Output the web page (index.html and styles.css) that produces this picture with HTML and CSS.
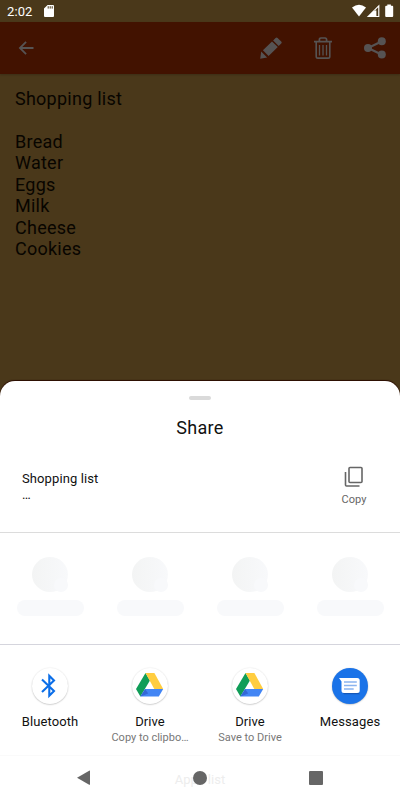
FILE: index.html
```html
<!DOCTYPE html>
<html lang="en">
<head>
    <meta charset="UTF-8">
    <meta name="viewport" content="width=device-width, initial-scale=1.0">
    <title>Share</title>
    <link rel="stylesheet" href="styles.css">
</head>
<body>
    <div class="status-bar">
        <span class="time">2:02</span>
        <svg class="sd-card" width="10" height="12" viewBox="0 0 10 12">
            <path fill="#fff" d="M3.6 0H9a1 1 0 0 1 1 1v10a1 1 0 0 1-1 1H1a1 1 0 0 1-1-1V3.6z"/>
            <path stroke="#4a381a" stroke-width="1" d="M4.2 1.2v2.4M6.2 1.2v2.4M8.2 1.2v2.4"/>
        </svg>
        <svg class="signals" width="42" height="14" viewBox="0 0 42 14">
            <path fill="#fff" d="M0 3.4Q7-1.8 14 3.4L7 12.500z"/>
            <path fill="#fff" d="M27.4.5v12.600H14.8z"/>
            <path fill="#4a381a" d="M22.2 7.2l4-3.900v8.600h-1.800V6.500h-2.200z"/>
            <path fill="#fff" d="M35.3.500h3.600v1.200h1.300a1 1 0 0 1 1 1v9.400a1 1 0 0 1-1 1h-6a1 1 0 0 1-1-1V2.700a1 1 0 0 1 1-1h1.100z"/>
        </svg>
    </div>
    <div class="toolbar">
        <svg class="back" width="16" height="14" viewBox="0 0 16 14">
            <path fill="none" stroke="#565353" stroke-width="1.8" d="M15.500 7H2M8.100.8L1.900 7l6.200 6.200"/>
        </svg>
        <svg width="22" height="22" viewBox="0 0 22 22">
            <path fill="#565353" d="M.2 21.8l1-7.3 5.9 5.9zM2.9 13.3L12 4.4l5.8 5.7-9.2 9zM13.1 3.4L15.6.9q1-1 2 0l3.6 3.6q1 1 0 2l-2.500 2.500z"/>
        </svg>
        <svg width="18" height="22" viewBox="0 0 18 22">
            <g fill="none" stroke="#565353">
                <path stroke-width="1.7" d="M0 4.700h18M5.400 4V2.700Q5.400 1 7 1h4q1.600 0 1.600 1.700V4"/>
                <path stroke-width="1.6" d="M2.200 5v14.400q0 1.700 1.700 1.700h10.200q1.700 0 1.700-1.700V5"/>
                <path stroke-width="1.3" d="M5.500 8v10.500M9 8v10.500M12.500 8v10.500"/>
            </g>
        </svg>
        <svg width="22" height="22" viewBox="0 0 22 22">
            <path fill="none" stroke="#565353" stroke-width="2.2" d="M17.500 4.500L4 11l13.500 6.500"/>
            <g fill="#565353">
                <circle cx="17.800" cy="4.200" r="4"/>
                <circle cx="4" cy="11" r="4"/>
                <circle cx="17.800" cy="17.600" r="4"/>
            </g>
        </svg>
    </div>
    <div class="note">Shopping list

Bread
Water
Eggs
Milk
Cheese
Cookies</div>

    <div class="sheet">
        <div class="handle"></div>
        <h1>Share</h1>
        <div class="preview">
            <div class="preview-text">Shopping list<br>…</div>
            <div class="copy">
                <svg width="20" height="22" viewBox="0 0 20 22">
                    <path fill="none" stroke="#666" stroke-width="1.6" d="M6 1.500h11q1 0 1 1v13q0 1-1 1H6q-1 0-1-1v-13q0-1 1-1zM1.500 6v13q0 1 1 1H15.500"/>
                </svg>
                <span>Copy</span>
            </div>
        </div>
        <div class="contacts">
            <div class="contact"><div class="avatar"></div><div class="bar"></div></div>
            <div class="contact"><div class="avatar"></div><div class="bar"></div></div>
            <div class="contact"><div class="avatar"></div><div class="bar"></div></div>
            <div class="contact"><div class="avatar"></div><div class="bar"></div></div>
        </div>
        <div class="apps">
            <div class="app">
                <div class="app-icon">
                    <svg width="36" height="36" viewBox="0 0 36 36">
                        <path fill="none" stroke="#0b6ee8" stroke-width="2.1" d="M10 11.500l12 11.500-4.700 4.800V7.800l4.700 4.700-12 11.500"/>
                    </svg>
                </div>
                <div class="name">Bluetooth</div>
            </div>
            <div class="app">
                <div class="app-icon">
                    <svg width="36" height="36" viewBox="0 0 36 36">
                        <path fill="#109d58" d="M13.500 5L4 21l4.400 7.500 9.500-16z"/>
                        <path fill="#ffcd40" d="M13.500 5h8.900l8.800 16h-8.900z"/>
                        <path fill="#4285f4" d="M13.100 21h18.100L26.800 28.500H8.400z"/>
                        <path fill="#3468d5" d="M13.100 21l3.100 4.500L8.400 28.500z"/>
                    </svg>
                </div>
                <div class="name">Drive</div>
                <div class="detail">Copy to clipbo…</div>
            </div>
            <div class="app">
                <div class="app-icon">
                    <svg width="36" height="36" viewBox="0 0 36 36">
                        <path fill="#109d58" d="M13.500 5L4 21l4.400 7.500 9.500-16z"/>
                        <path fill="#ffcd40" d="M13.500 5h8.900l8.800 16h-8.900z"/>
                        <path fill="#4285f4" d="M13.100 21h18.100L26.800 28.500H8.400z"/>
                        <path fill="#3468d5" d="M13.100 21l3.100 4.500L8.400 28.500z"/>
                    </svg>
                </div>
                <div class="name">Drive</div>
                <div class="detail">Save to Drive</div>
            </div>
            <div class="app">
                <div class="app-icon messages">
                    <svg width="36" height="36" viewBox="0 0 36 36">
                        <path fill="#1558b8" d="M11 25h16l1 1.300H12z"/>
                        <path fill="#fff" d="M7 10H25.200q2.500 0 2.500 2.500v10q0 2.500-2.500 2.500H12q-2.500 0-2.500-2.500V13.500z"/>
                        <path stroke="#8ab4f0" stroke-width="1.3" d="M12 14h12.800M12 17.500h12.800M12 21h9.700"/>
                    </svg>
                </div>
                <div class="name">Messages</div>
            </div>
        </div>
        <div class="nav">
            <span class="apps-title">Apps list</span>
            <svg width="14" height="16" viewBox="0 0 14 16">
                <path fill="#666" d="M0 7.700L12.200.7q.8-.4.8.4v13.200q0 .8-.8.4z"/>
            </svg>
            <div class="home"></div>
            <div class="recent"></div>
        </div>
    </div>
</body>
</html>
```
FILE: styles.css
```css
* {
    box-sizing: border-box;
}
body {
    margin: 0;
    height: 800px;
    display: flex;
    flex-direction: column;
    overflow: hidden;
    font-family: Roboto, sans-serif;
    background-color: #4a381a;
}
svg {
    display: block;
    flex-shrink: 0;
}
/* status bar */
.status-bar {
    height: 22px;
    flex-shrink: 0;
    display: flex;
    align-items: center;
    padding: 0 6px 0 7px;
    color: white;
}
.time {
    font-size: 13px;
    width: 37px;
    letter-spacing: 0.1px;
}
.signals {
    margin-left: auto;
}
/* red toolbar */
.toolbar {
    height: 52px;
    flex-shrink: 0;
    display: flex;
    align-items: center;
    padding: 0 14.5px 0 18px;
    gap: 32px;
    background-color: #421200;
    box-shadow: 0 1px 2px rgba(0, 0, 0, 0.2);
}
.back {
    margin-right: auto;
}
.note {
    flex: 1;
    padding: 14px 15px;
    font-size: 18px;
    line-height: 21.45px;
    letter-spacing: 0.25px;
    white-space: pre-line;
    color: #080500;
}
/* bottom sheet */
.sheet {
    height: 419px;
    flex-shrink: 0;
    display: flex;
    flex-direction: column;
    background-color: white;
    border-radius: 15px 15px 0 0;
    box-shadow: 0 -1px 1px #2b0d00;
    color: #111;
}
.handle {
    width: 22px;
    height: 4px;
    margin: 15px auto 0;
    border-radius: 2px;
    background-color: #dadada;
}
h1 {
    margin: 17px 0 0;
    font-size: 18px;
    font-weight: 400;
    line-height: 22px;
    letter-spacing: 0.3px;
    text-align: center;
}
.preview {
    height: 94px;
    display: flex;
    justify-content: space-between;
    padding: 27px 22px 0;
    border-bottom: 1px solid #dcdcdc;
}
.preview-text {
    padding-top: 5px;
    font-size: 13px;
    line-height: 16px;
    letter-spacing: 0.1px;
}
.copy {
    width: 48px;
    display: flex;
    flex-direction: column;
    align-items: center;
    font-size: 11px;
    line-height: 14px;
    color: #666;
}
.copy span {
    margin-top: 5px;
}
/* placeholders */
.contacts {
    height: 112px;
    display: grid;
    grid-template-columns: repeat(4, 1fr);
    padding-top: 24px;
    border-bottom: 1px solid #d5d5dd;
}
.contact {
    display: flex;
    flex-direction: column;
    align-items: center;
}
.avatar {
    position: relative;
    width: 36px;
    height: 35px;
    border-radius: 50%;
    background: linear-gradient(to right, #f3f4f4, #f8f9fb);
}
.avatar::after {
    content: "";
    position: absolute;
    right: 0;
    bottom: 0;
    width: 14px;
    height: 14px;
    border-radius: 50%;
    background-color: #f8f9fb;
}
.bar {
    width: 67px;
    height: 16px;
    margin-top: 8px;
    border-radius: 8px;
    background-color: #f8f9fb;
}
.apps {
    height: 111px;
    display: grid;
    grid-template-columns: repeat(4, 1fr);
    padding-top: 23px;
    border-bottom: 1px solid #fafafa;
}
.app {
    display: flex;
    flex-direction: column;
    align-items: center;
    white-space: nowrap;
}
.app-icon {
    width: 36px;
    height: 36px;
    border-radius: 50%;
    box-shadow: 0 0.5px 1.5px rgba(0, 0, 0, 0.3);
}
.messages {
    background-color: #1a73e8;
}
.name {
    margin-top: 10px;
    font-size: 13px;
    line-height: 16px;
    letter-spacing: 0.1px;
}
.detail {
    margin-top: 1px;
    font-size: 11px;
    line-height: 14px;
    color: #777;
}
/* navigation */
.nav {
    position: relative;
    flex: 1;
    display: flex;
    align-items: center;
    justify-content: space-between;
    padding: 0 77px 1px;
}
.apps-title {
    position: absolute;
    top: 16px;
    left: 0;
    width: 100%;
    font-size: 13px;
    line-height: 16px;
    text-align: center;
    color: #ededed;
}
.home {
    position: relative;
    width: 14px;
    height: 14px;
    border-radius: 50%;
    background-color: #666;
}
.recent {
    width: 14px;
    height: 14px;
    border-radius: 1px;
    background-color: #666;
}
```
